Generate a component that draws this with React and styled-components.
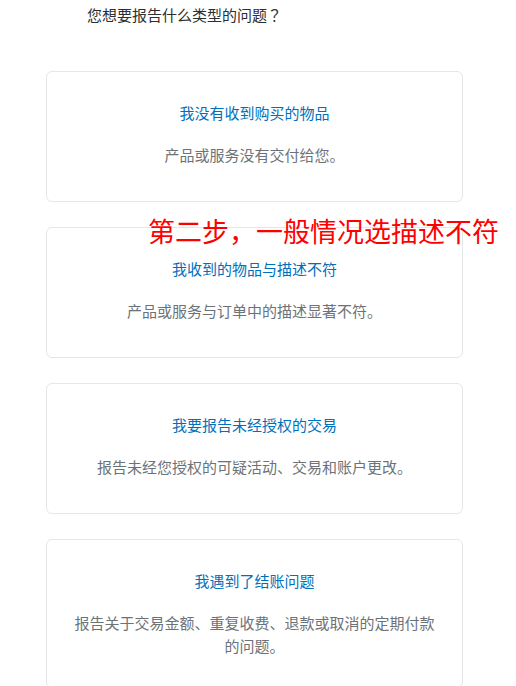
import React from "react";
import styled, { createGlobalStyle } from "styled-components";

const GlobalStyle = createGlobalStyle`
  html, body { margin: 0; padding: 0; background: #ffffff; }
  body {
    font-family: "Microsoft YaHei", "Noto Sans CJK SC", "Noto Sans", sans-serif;
    -webkit-font-smoothing: antialiased;
  }
`;

const Page = styled.div`
  width: 516px;
  box-sizing: border-box;
  padding: 4px 0 0 0;
`;

const Question = styled.div`
  padding-left: 87px;
  font-size: 15px;
  line-height: 22px;
  color: #2c2e2f;
`;

const Punct = styled.span`
  font-family: "Noto Sans CJK TC", "Noto Sans CJK SC", sans-serif;
`;

const List = styled.div`
  display: flex;
  flex-direction: column;
  gap: 25px;
  margin: 45px 53px 0 46px;
`;

const Card = styled.div`
  position: relative;
  box-sizing: border-box;
  min-height: 131px;
  border: 1px solid #e3e7ea;
  border-radius: 6px;
  background: #ffffff;
  padding: 30px 24px 30px;
  text-align: center;
`;

const Title = styled.div`
  font-size: 15px;
  line-height: 22px;
  color: #0070ba;
`;

const Desc = styled.div`
  margin-top: 20px;
  font-size: 15px;
  line-height: 22.5px;
  color: #6c7378;
`;

const Annotation = styled.div`
  position: absolute;
  left: 101px;
  top: -12px;
  white-space: nowrap;
  font-size: 27px;
  line-height: 30px;
  color: #ff0000;
  pointer-events: none;
`;

const options = [
  { title: "我没有收到购买的物品", desc: "产品或服务没有交付给您。" },
  {
    title: "我收到的物品与描述不符",
    desc: "产品或服务与订单中的描述显著不符。",
    note: "第二步，一般情况选描述不符",
  },
  { title: "我要报告未经授权的交易", desc: "报告未经您授权的可疑活动、交易和账户更改。" },
  {
    title: "我遇到了结账问题",
    desc: "报告关于交易金额、重复收费、退款或取消的定期付款的问题。",
  },
];

export default function App() {
  return (
    <Page>
      <GlobalStyle />
      <Question>
        您想要报告什么类型的问题<Punct>？</Punct>
      </Question>
      <List>
        {options.map((o) => (
          <Card key={o.title}>
            {o.note && <Annotation>{o.note}</Annotation>}
            <Title>{o.title}</Title>
            <Desc>{o.desc}</Desc>
          </Card>
        ))}
      </List>
    </Page>
  );
}
